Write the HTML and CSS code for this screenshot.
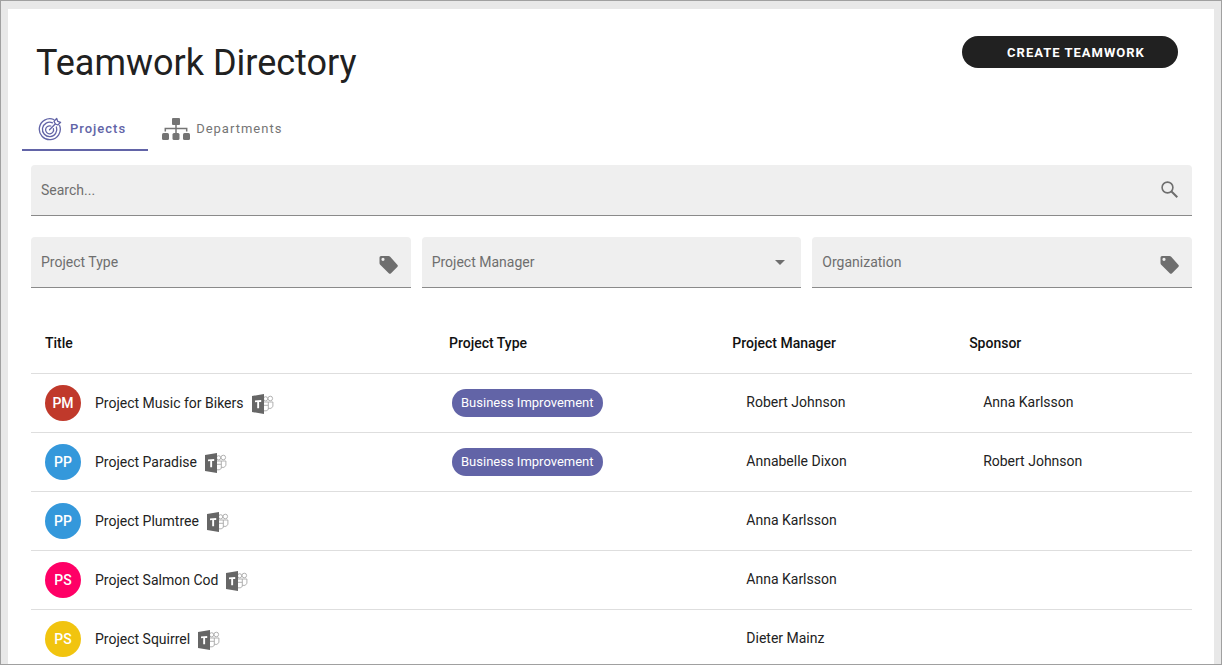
FILE: index.html
```html
<!DOCTYPE html>
<html lang="en">
<head>
<meta charset="utf-8">
<meta name="viewport" content="width=device-width, initial-scale=1">
<title>Teamwork Directory</title>
<link rel="stylesheet" href="styles.css">
</head>
<body>
<svg class="sprite" aria-hidden="true">
  <symbol id="tag" viewBox="0 0 20 20"><path fill-rule="evenodd" d="M2 1h7.500q1 0 1.700.7l7.300 8.300q.8.900 0 1.700l-6.700 6.700q-.900.800-1.800 0L1.200 9.800Q.5 9 .5 8V2.500Q.5 1 2 1zM4 2.700a1.600 1.600 0 1 0 0 3.200a1.600 1.600 0 1 0 0-3.200z"/></symbol>
  <symbol id="teams" viewBox="0 0 22 20">
    <g fill="none" stroke="#a8a8a8" stroke-width="0.900">
      <circle cx="13.600" cy="4.800" r="2.100"/><circle cx="18.300" cy="4.500" r="2.300"/>
      <path d="M11.500 8h4.800v7.500q-1.800 2-4.800 1.300M16.300 8h4.600v4.600q-1.600 2.700-4.600 1.700M12 11.300h4.300"/>
    </g>
    <path fill="#666" d="M0 2 12 0v20L0 18z"/>
    <path fill="#fff" d="M3 6.400 9.200 6v1.900l-2.100.1v6.300l-1.900-.1V8.100L3 8.200z"/>
  </symbol>
</svg>
<div class="frame">
<main class="page">
  <header class="header">
    <h1 class="heading">Teamwork Directory</h1>
    <button class="create" type="button">CREATE TEAMWORK</button>
  </header>

  <nav class="tabs">
    <a class="tab tab-active" href="#projects">
      <svg class="tab-icon" viewBox="0 0 24 24" aria-hidden="true"><g fill="none" stroke="currentColor" stroke-width="1.300" stroke-linecap="round" stroke-linejoin="round"><path d="M15.800 2.500A10.500 10.500 0 1 0 21.700 8.700"/><path d="M14.500 5.800A7.200 7.200 0 1 0 18.400 10"/><path d="M12.800 9A4 4 0 1 0 15.400 11.600"/><path d="M11.500 12.800 17.500 6.800M17.300 7 16 4.200 18.700 1.500l1 2.800 2.900 1-2.700 2.700z"/></g></svg>
      <span>Projects</span>
    </a>
    <a class="tab" href="#departments">
      <svg class="tab-icon tab-icon-wide" viewBox="0 0 28 24" aria-hidden="true"><g fill="currentColor"><rect x="10" y="1" width="8" height="7" rx="1"/><rect x="0" y="16" width="7" height="7" rx="1.500"/><rect x="10.500" y="16" width="7" height="7" rx="1.500"/><rect x="21" y="16" width="7" height="7" rx="1.500"/></g><path fill="none" stroke="currentColor" stroke-width="1.500" d="M14 8v8M3.300 14.500v-3h21.400v3"/></svg>
      <span>Departments</span>
    </a>
  </nav>

  <form class="filters">
    <div class="field field-search">
      <input class="control" type="text" aria-label="Search" placeholder="Search...">
      <svg class="search-icon" viewBox="0 0 20 20" aria-hidden="true"><circle cx="7.500" cy="7.500" r="5.400" fill="none" stroke="currentColor" stroke-width="1.600"/><path fill="none" stroke="currentColor" stroke-width="2" d="m11.500 11.500 5.800 5.800"/></svg>
    </div>
    <div class="field">
      <input class="control" type="text" aria-label="Project Type" placeholder="Project Type">
      <svg class="tag-icon" aria-hidden="true"><use href="#tag"/></svg>
    </div>
    <div class="field">
      <select class="control" aria-label="Project Manager"><option>Project Manager</option></select>
      <svg class="arrow-icon" viewBox="0 0 10 5" aria-hidden="true"><path d="M0 0h10L5 5z"/></svg>
    </div>
    <div class="field">
      <input class="control" type="text" aria-label="Organization" placeholder="Organization">
      <svg class="tag-icon" aria-hidden="true"><use href="#tag"/></svg>
    </div>
  </form>

  <table class="table">
    <thead>
      <tr><th class="col-title">Title</th><th class="col-type">Project Type</th><th class="col-person">Project Manager</th><th class="col-person">Sponsor</th></tr>
    </thead>
    <tbody>
      <tr>
        <td><div class="project"><span class="avatar red">PM</span><a class="name" href="#bikers">Project Music for Bikers</a><svg class="teams" role="img" aria-label="Teams"><use href="#teams"/></svg></div></td>
        <td class="type"><span class="chip">Business Improvement</span></td><td class="person">Robert Johnson</td><td class="person">Anna Karlsson</td>
      </tr>
      <tr>
        <td><div class="project"><span class="avatar blue">PP</span><a class="name" href="#paradise">Project Paradise</a><svg class="teams" role="img" aria-label="Teams"><use href="#teams"/></svg></div></td>
        <td class="type"><span class="chip">Business Improvement</span></td><td class="person">Annabelle Dixon</td><td class="person">Robert Johnson</td>
      </tr>
      <tr>
        <td><div class="project"><span class="avatar blue">PP</span><a class="name" href="#plumtree">Project Plumtree</a><svg class="teams" role="img" aria-label="Teams"><use href="#teams"/></svg></div></td>
        <td class="type"></td><td class="person">Anna Karlsson</td><td class="person"></td>
      </tr>
      <tr>
        <td><div class="project"><span class="avatar pink">PS</span><a class="name" href="#salmon">Project Salmon Cod</a><svg class="teams" role="img" aria-label="Teams"><use href="#teams"/></svg></div></td>
        <td class="type"></td><td class="person">Anna Karlsson</td><td class="person"></td>
      </tr>
      <tr>
        <td><div class="project"><span class="avatar yellow">PS</span><a class="name" href="#squirrel">Project Squirrel</a><svg class="teams" role="img" aria-label="Teams"><use href="#teams"/></svg></div></td>
        <td class="type"></td><td class="person">Dieter Mainz</td><td class="person"></td>
      </tr>
    </tbody>
  </table>
</main>
</div>
</body>
</html>
```
FILE: styles.css
```css
* { box-sizing: border-box; }
body {
  margin: 0;
  font-family: Roboto, "Liberation Sans", sans-serif;
  font-size: 14px;
  color: #222;
}
.sprite { display: none; }
.frame {
  height: 100vh;
  overflow: hidden;
  padding: 8px 7px 0;
  border: 1px solid #a0a0a0;
  background: #e8e8e8;
}
.page {
  min-height: 100%;
  padding: 27px 22px 0 23px;
  background: #fff;
}
.header {
  display: flex;
  justify-content: space-between;
  align-items: flex-start;
  padding: 0 14px 0 5px;
}
.heading {
  margin: 0;
  font-size: 36px;
  line-height: 54px;
  font-weight: 400;
  color: #212121;
}
.create {
  width: 216px;
  height: 32px;
  padding: 0 0 0 12px;
  border: 0;
  border-radius: 16px;
  background: #212121;
  color: #fff;
  font-family: inherit;
  font-size: 13px;
  font-weight: 700;
  letter-spacing: 1px;
}
.tabs {
  display: flex;
  margin: 18px 0 14px -9px;
}
.tab {
  display: flex;
  align-items: center;
  gap: 8px;
  height: 43px;
  padding: 0 22px 0 16px;
  border-bottom: 2px solid transparent;
  color: #757575;
  font-size: 13px;
  line-height: 16px;
  letter-spacing: 1px;
  text-decoration: none;
}
.tab + .tab { padding-left: 14px; gap: 6px; }
.tab-active {
  border-color: #6264a7;
  color: #6264a7;
  font-weight: 500;
}
.tab-icon { width: 24px; height: 24px; }
.tab-icon-wide { width: 28px; }
.filters {
  display: grid;
  grid-template-columns: repeat(3, 1fr);
  gap: 21px 11px;
}
.field {
  display: grid;
  align-items: center;
  height: 51px;
  border-bottom: 1px solid #8a8a8a;
  border-radius: 4px 4px 0 0;
  background: #efefef;
  color: #6e6e6e;
}
.field > * { grid-area: 1 / 1; }
.field-search { grid-column: 1 / -1; }
.control {
  width: 100%;
  height: 100%;
  padding: 0 40px 0 10px;
  border: 0;
  background: transparent;
  color: #6e6e6e;
  font: inherit;
  appearance: none;
}
.control::placeholder { color: #6e6e6e; opacity: 1; }
.search-icon, .tag-icon, .arrow-icon {
  justify-self: end;
  pointer-events: none;
}
.search-icon { width: 20px; height: 20px; margin-right: 12px; }
.tag-icon { width: 20px; height: 20px; margin: 5px 12px 0 0; fill: currentColor; }
.arrow-icon { width: 10px; height: 5px; margin-right: 16px; fill: currentColor; }
.table {
  width: 100%;
  margin-top: 25px;
  table-layout: fixed;
  border-collapse: separate;
  border-spacing: 0;
}
th {
  height: 61px;
  padding: 0 14px;
  border-bottom: 1px solid #dedede;
  font-weight: 500;
  text-align: left;
  color: #111;
}
td {
  height: 59px;
  padding: 0 14px;
  border-bottom: 1px solid #dedede;
}
.col-title { width: 34.8%; }
.col-type { width: 24.4%; }
.col-person { width: 20.4%; }
.type { padding-left: 17px; }
.person { padding: 0 14px 2px 28px; }
.project { display: flex; align-items: center; }
.avatar {
  width: 36px;
  height: 36px;
  margin-right: 14px;
  border-radius: 50%;
  color: #fff;
  font-weight: 500;
  line-height: 36px;
  text-align: center;
}
.red { background: #c0392b; }
.blue { background: #3498db; }
.pink { background: #ff0066; }
.yellow { background: #f1c40f; }
.name { color: inherit; text-decoration: none; }
.teams { width: 22px; height: 20px; margin: 2px 0 0 8px; }
.chip {
  display: inline-block;
  padding: 0 9px;
  border-radius: 14px;
  background: #6264a7;
  color: #fff;
  font-size: 13px;
  line-height: 28px;
  white-space: nowrap;
}
```
